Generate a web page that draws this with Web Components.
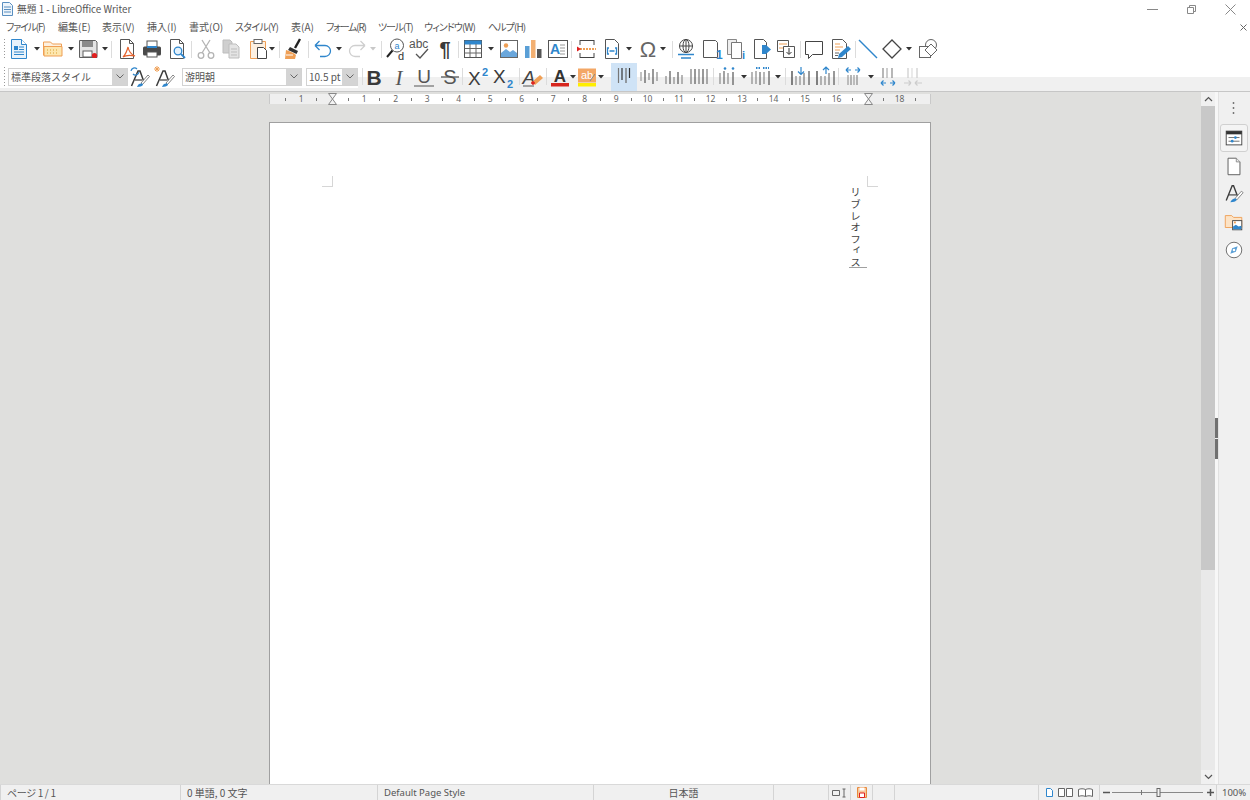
<!DOCTYPE html>
<html lang="ja">
<head>
<meta charset="utf-8">
<title>無題 1 - LibreOffice Writer</title>
<style>
html, body { margin: 0; height: 100%; overflow: hidden; background: #fff; }
body { font-family: "Noto Sans CJK JP", "Noto Sans", sans-serif; }
#app { display: flex; flex-direction: column; width: 1250px; height: 800px; }
#main { display: flex; flex: 1; min-height: 0; }
</style>
</head>
<body>
<div id="app">
  <lo-titlebar>無題 1 - LibreOffice Writer</lo-titlebar>
  <lo-menubar>
    <lo-menu w="52" sp="-1.2">ファイル(F)</lo-menu><lo-menu w="44">編集(E)</lo-menu><lo-menu w="45">表示(V)</lo-menu><lo-menu w="42">挿入(I)</lo-menu><lo-menu w="46">書式(O)</lo-menu><lo-menu w="56" sp="-.7">スタイル(Y)</lo-menu><lo-menu w="35">表(A)</lo-menu><lo-menu w="52" sp="-1.2">フォーム(R)</lo-menu><lo-menu w="46" sp="-1.1">ツール(T)</lo-menu><lo-menu w="64" sp="-.9">ウィンドウ(W)</lo-menu><lo-menu w="50" sp="-.9">ヘルプ(H)</lo-menu>
  </lo-menubar>
  <lo-toolbar h="26">
    <lo-tool kind="grip" cx="4"></lo-tool>
    <lo-tool icon="new" cx="19"></lo-tool><lo-tool kind="arrow" cx="37"></lo-tool>
    <lo-tool icon="open" cx="53"></lo-tool><lo-tool kind="arrow" cx="71"></lo-tool>
    <lo-tool icon="save" cx="88"></lo-tool><lo-tool kind="arrow" cx="105"></lo-tool>
    <lo-tool kind="sep" cx="111"></lo-tool>
    <lo-tool icon="pdf" cx="127"></lo-tool><lo-tool icon="print" cx="152"></lo-tool><lo-tool icon="preview" cx="177"></lo-tool>
    <lo-tool kind="sep" cx="191"></lo-tool>
    <lo-tool icon="cut" cx="206"></lo-tool><lo-tool icon="copy" cx="231"></lo-tool><lo-tool icon="paste" cx="258"></lo-tool><lo-tool kind="arrow" cx="272"></lo-tool>
    <lo-tool kind="sep" cx="279"></lo-tool>
    <lo-tool icon="clone" cx="293"></lo-tool>
    <lo-tool kind="sep" cx="308"></lo-tool>
    <lo-tool icon="undo" cx="323"></lo-tool><lo-tool kind="arrow" cx="339"></lo-tool>
    <lo-tool icon="redo" cx="357"></lo-tool><lo-tool kind="arrow" off cx="373"></lo-tool>
    <lo-tool kind="sep" cx="381"></lo-tool>
    <lo-tool icon="find" cx="396"></lo-tool><lo-tool icon="spell" cx="420"></lo-tool><lo-tool icon="pilcrow" cx="445"></lo-tool>
    <lo-tool kind="sep" cx="458"></lo-tool>
    <lo-tool icon="table" cx="473"></lo-tool><lo-tool kind="arrow" cx="491"></lo-tool>
    <lo-tool icon="image" cx="509"></lo-tool><lo-tool icon="chart" cx="533"></lo-tool><lo-tool icon="textbox" cx="558"></lo-tool>
    <lo-tool kind="sep" cx="571"></lo-tool>
    <lo-tool icon="pagebreak" cx="587"></lo-tool><lo-tool icon="field" cx="612"></lo-tool><lo-tool kind="arrow" cx="629"></lo-tool>
    <lo-tool icon="omega" cx="648"></lo-tool><lo-tool kind="arrow" cx="663"></lo-tool>
    <lo-tool kind="sep" cx="672"></lo-tool>
    <lo-tool icon="link" cx="686"></lo-tool><lo-tool icon="footnote" cx="711"></lo-tool><lo-tool icon="endnote" cx="736"></lo-tool><lo-tool icon="bookmark" cx="761"></lo-tool><lo-tool icon="crossref" cx="786"></lo-tool>
    <lo-tool kind="sep" cx="800"></lo-tool>
    <lo-tool icon="comment" cx="814"></lo-tool><lo-tool icon="track" cx="840"></lo-tool>
    <lo-tool kind="sep" cx="855"></lo-tool>
    <lo-tool icon="line" cx="868"></lo-tool><lo-tool icon="shape" cx="892"></lo-tool><lo-tool kind="arrow" cx="909"></lo-tool><lo-tool icon="draw" cx="928"></lo-tool>
  </lo-toolbar>
  <lo-toolbar h="30" band>
    <lo-tool kind="grip" cx="4"></lo-tool>
    <lo-combo w="120" cx="68">標準段落スタイル</lo-combo>
    <lo-tool icon="styleupd" cx="140"></lo-tool><lo-tool icon="stylenew" cx="165"></lo-tool>
    <lo-combo w="120" cx="242">游明朝</lo-combo>
    <lo-combo w="52" cx="332">10.5 pt</lo-combo>
    <lo-tool kind="sep" cx="362"></lo-tool>
    <lo-tool icon="bold" cx="374"></lo-tool><lo-tool icon="italic" cx="399"></lo-tool><lo-tool icon="under" cx="424"></lo-tool><lo-tool icon="strike" cx="450"></lo-tool>
    <lo-tool kind="sep" cx="462"></lo-tool>
    <lo-tool icon="sup" cx="479"></lo-tool><lo-tool icon="sub" cx="504"></lo-tool>
    <lo-tool kind="sep" cx="519"></lo-tool>
    <lo-tool icon="clear" cx="533"></lo-tool>
    <lo-tool kind="sep" cx="546"></lo-tool>
    <lo-tool icon="fontcolor" cx="560"></lo-tool><lo-tool kind="arrow" cx="573"></lo-tool>
    <lo-tool icon="hilite" cx="587"></lo-tool><lo-tool kind="arrow" cx="601"></lo-tool>
    <lo-tool icon="alTop" active cx="624"></lo-tool><lo-tool icon="alMid" cx="649"></lo-tool><lo-tool icon="alBot" cx="674"></lo-tool><lo-tool icon="alJust" cx="699"></lo-tool>
    <lo-tool kind="sep" cx="713"></lo-tool>
    <lo-tool icon="bullets" cx="727"></lo-tool><lo-tool kind="arrow" cx="744"></lo-tool>
    <lo-tool icon="numbers" cx="761"></lo-tool><lo-tool kind="arrow" cx="778"></lo-tool>
    <lo-tool kind="sep" cx="785"></lo-tool>
    <lo-tool icon="indDown" cx="801"></lo-tool><lo-tool icon="indUp" cx="826"></lo-tool>
    <lo-tool kind="sep" cx="838"></lo-tool>
    <lo-tool icon="spacing" cx="853"></lo-tool><lo-tool kind="arrow" cx="871"></lo-tool>
    <lo-tool icon="spInc" cx="888"></lo-tool><lo-tool icon="spDec" cx="913"></lo-tool>
  </lo-toolbar>
  <div id="main">
    <lo-document>
      <lo-ruler></lo-ruler>
      <lo-page>リブレオフィス</lo-page>
    </lo-document>
    <lo-scrollbar></lo-scrollbar>
    <lo-sash></lo-sash>
    <lo-sidebar></lo-sidebar>
  </div>
  <lo-statusbar></lo-statusbar>
</div>

<script>
const CJK = '"Noto Sans CJK JP", "Noto Sans", sans-serif';
const BLUE = '#2f86cc', ORANGE = '#ef9f55', DARK = '#3c3c3c';

// vertical bars for the paragraph/vertical align icons
function bars(list, col) {
    return list.map(b => `<path d="M${b[0]} ${b[1]}V${b[2]}" stroke="${b[3] || col || '#4a4a4a'}" stroke-width="1.2"/>`).join('');
}
function arrowsH(y, col) {
    return `<path d="M5 ${y}h5M5 ${y}l2.5-2.5M5 ${y}l2.5 2.5M19 ${y}h-5M19 ${y}l-2.5-2.5M19 ${y}l-2.5 2.5" stroke="${col}" stroke-width="1.2" fill="none"/>`;
}
const brush = `<path d="M3.5 21L10 6h2l4 11" fill="none" stroke="${DARK}" stroke-width="1.500"/><path d="M7 15h7" stroke="${DARK}" stroke-width="1.200"/>
    <path d="M13 18l7-8 1.500 1.500-7 8z" fill="#fff" stroke="#666" stroke-width=".8"/><path d="M9 22c1-3 3-4 5-3.500s1 3.500-5 3.500z" fill="${BLUE}"/>`;

const ICONS = {
    new: `<path d="M4.500 2.500h10l5 5v14h-15z" fill="#e9f3fb" stroke="${BLUE}"/><path d="M14.500 2.500v5h5" fill="#fff" stroke="${BLUE}"/>
        <rect x="7" y="9" width="4" height="4" fill="${BLUE}"/><path d="M12 10h5M12 12.500h5M7 15h10M7 17.500h10" stroke="${BLUE}"/>`,
    open: `<path d="M2.500 18V5h7l2 2h9v11z" fill="#fdf0e0" stroke="${ORANGE}"/><path d="M3 9.500h18v9.500H3z" fill="#fde6ae" stroke="${ORANGE}"/><path d="M6 13h12M6 16h12" stroke="#d9a02e" stroke-dasharray="1 2"/>`,
    save: `<path d="M3.500 3.500h16l1.500 1.500v15.500H3.500z" fill="#e4e4e4" stroke="#5e5e5e"/><rect x="6" y="4" width="11" height="6" fill="#8a8a8a"/><rect x="7" y="14" width="9" height="6" fill="#fff" stroke="#5e5e5e"/><circle cx="18.500" cy="18.500" r="2.600" fill="#e02020"/>`,
    pdf: `<path d="M5.500 2.500h9l4 4v15h-13z" fill="#fff" stroke="#555"/><path d="M14.500 2.500v4h4" fill="none" stroke="#555"/><path d="M20 19c-4-1.500-6-4-7-9-1 4-3 8-5 10 3-2 7-2 12-1z" fill="none" stroke="#e5622d" stroke-width="1.200"/>`,
    print: `<rect x="7" y="4" width="10" height="6" fill="#fff" stroke="#555"/><rect x="3" y="9.500" width="18" height="9" rx="1.500" fill="#4a4a4a"/><rect x="7" y="9" width="10" height="2" fill="${BLUE}"/><rect x="7" y="15" width="10" height="5" fill="#fff" stroke="#555"/>`,
    preview: `<path d="M5.500 2.500h9l4 4v15h-13z" fill="#fff" stroke="#555"/><path d="M14.500 2.500v4h4" fill="none" stroke="#555"/><circle cx="13" cy="14" r="3.800" fill="#e4f1fb" stroke="${BLUE}" stroke-width="1.300"/><path d="M16 17l4 4" stroke="${BLUE}" stroke-width="1.800"/>`,
    cut: `<path d="M8 3l8 13M16 3L8 16" stroke="#b4b4b4" stroke-width="1.300"/><circle cx="7" cy="18.500" r="2.800" fill="none" stroke="#b4b4b4" stroke-width="1.300"/><circle cx="17" cy="18.500" r="2.800" fill="none" stroke="#b4b4b4" stroke-width="1.300"/>`,
    copy: `<path d="M4 3h7l2 2v11H4z" fill="#cfcfcf" stroke="#bdbdbd"/><path d="M10 7h7l3 3v11H10z" fill="#e4e4e4" stroke="#bdbdbd"/><path d="M12 12h6M12 15h6M12 18h6" stroke="#bdbdbd"/>`,
    paste: `<path d="M4.500 4.500h15v17h-15z" fill="#fdf0e1" stroke="${ORANGE}"/><rect x="8" y="2.500" width="8" height="4" fill="#fff" stroke="#666"/><path d="M11.500 10.500h6l3 3v8h-9z" fill="#fff" stroke="#444"/>`,
    clone: `<path d="M14 11l5-9" stroke="#222" stroke-width="2.400"/><path d="M9 10l8 4-1.500 3L7 13z" fill="#333"/><path d="M5 13c4 1 8 3 10 5l-1 4H4z" fill="${ORANGE}"/><path d="M5 18h7" stroke="#fff"/>`,
    undo: `<path d="M4 8.500h10a5.500 5.500 0 0 1 0 11h-5M4 8.500l4.500-4.500M4 8.500l4.500 4.500" fill="none" stroke="${BLUE}" stroke-width="1.300"/>`,
    redo: `<path d="M20 8.500H10a5.500 5.500 0 0 0 0 11h5M20 8.500l-4.500-4.500M20 8.500l-4.500 4.500" fill="none" stroke="#cfcfcf" stroke-width="1.300"/>`,
    find: `<circle cx="13" cy="8.500" r="6.500" fill="#fff" stroke="#555"/><path d="M8.500 13.500L3 20" stroke="#222" stroke-width="2"/><text x="13" y="11.500" font-size="9" text-anchor="middle" fill="${BLUE}" font-family="Liberation Sans">a</text><text x="14" y="22.500" font-size="11" fill="#333" font-family="Liberation Sans">d</text>`,
    spell: `<text x="1" y="11" font-size="12" fill="#555" font-family="Liberation Sans">abc</text><path d="M8 17l4 4 8-9" fill="none" stroke="#555" stroke-width="1.300"/>`,
    pilcrow: `<text x="12" y="18.500" font-size="20" font-weight="bold" text-anchor="middle" fill="#3a3a3a" font-family="Liberation Sans">¶</text>`,
    table: `<rect x="3.500" y="3.500" width="17" height="17" fill="#fff" stroke="#555"/><rect x="3.500" y="3.500" width="17" height="4" fill="${BLUE}"/><path d="M3.500 11.500h17M3.500 16h17M9 7v13M15 7v13" stroke="#666"/>`,
    image: `<rect x="3.500" y="3.500" width="17" height="17" fill="#fff" stroke="#666"/><circle cx="9" cy="8.500" r="2.200" fill="${ORANGE}"/><path d="M4 20v-4l5-4 4 3 3-2 4 3v4z" fill="#6aa7dc"/>`,
    chart: `<rect x="4" y="9" width="4.500" height="12" fill="#5a9fd6"/><rect x="10" y="3" width="4.500" height="18" fill="#f3b072"/><rect x="16" y="12" width="4.500" height="9" fill="#555"/>`,
    textbox: `<rect x="2.500" y="3.500" width="19" height="17" fill="#fff" stroke="#555"/><text x="4" y="17" font-size="14" font-weight="bold" fill="${BLUE}" font-family="Liberation Sans">A</text><path d="M14 8h5M14 11h5M14 14h5M14 17h5" stroke="#999"/>`,
    pagebreak: `<path d="M5 3.500h14M5 20.500h14" stroke="#444"/><path d="M5 3v5M19 3v5M5 16v5M19 16v5" stroke="#444"/><path d="M5 12h16" stroke="${ORANGE}" stroke-width="2" stroke-dasharray="2 1"/><path d="M2 9.500v5l4-2.500z" fill="#e02020"/>`,
    field: `<path d="M5.500 2.500h9l4 4v15h-13z" fill="#fff" stroke="#555"/><path d="M9 11H7.500v6H9M15 11h1.500v6H15M9.500 14h5" fill="none" stroke="${BLUE}" stroke-width="1.300"/>`,
    omega: `<text x="12" y="19.500" font-size="22" text-anchor="middle" fill="#666" font-family="Liberation Sans">Ω</text>`,
    link: `<circle cx="12" cy="9" r="6.500" fill="none" stroke="#444"/><ellipse cx="12" cy="9" rx="3" ry="6.500" fill="none" stroke="#444"/><path d="M5.500 9h13M12 2.500v13" stroke="#444"/><path d="M4 17.500h16M7 21h10" stroke="${BLUE}" stroke-width="1.500"/>`,
    footnote: `<path d="M4.500 3.500h12l2 2v15h-14z" fill="#fff" stroke="#555"/><text x="17" y="22" font-size="12" font-weight="bold" fill="${BLUE}" font-family="Liberation Sans">1</text>`,
    endnote: `<path d="M3.500 2.500h9v15h-9z" fill="#eee" stroke="#888"/><path d="M7.500 5.500h10v16h-10z" fill="#fff" stroke="#777"/><text x="18" y="22" font-size="11" font-weight="bold" fill="${BLUE}" font-family="Liberation Sans">i</text>`,
    bookmark: `<path d="M5.500 2.500h9l3 3v16h-12z" fill="#fff" stroke="#555"/><path d="M13 8h4l5 4.500-5 4.500h-4z" fill="${BLUE}"/>`,
    crossref: `<path d="M3.500 3.500h11v11h-11z" fill="#fff" stroke="#555"/><path d="M9.500 9.500h11v11h-11z" fill="#fff" stroke="#555"/><path d="M5 7h8M5 11h4" stroke="${ORANGE}"/><path d="M15 11v6M12.500 15l2.500 2.500 2.500-2.500" fill="none" stroke="#333"/>`,
    comment: `<path d="M3.500 4.500h17v13h-10l-4 4v-4h-3z" fill="#fff" stroke="#444"/>`,
    track: `<path d="M4.500 2.500h10l4 4v15h-14z" fill="#fff" stroke="#555"/><path d="M7 7h5M7 10h8M7 13h5" stroke="${ORANGE}"/><path d="M7 16h4M7 18.500h3" stroke="#666"/><path d="M10 21l1-4 9-8 3 3-9 8z" fill="${BLUE}"/>`,
    line: `<path d="M3 3l18 18" stroke="${BLUE}" stroke-width="1.400"/>`,
    shape: `<path d="M12 3l9 9-9 9-9-9z" fill="#fff" stroke="#444" stroke-width="1.300"/>`,
    draw: `<circle cx="15" cy="8" r="5.500" fill="#fff" stroke="#666"/><rect x="3.500" y="9.500" width="11" height="11" fill="#fff" stroke="#666"/><path d="M15 7l6 6-6 6-6-6z" fill="#fff" stroke="#666"/>`,
    styleupd: brush + `<path d="M3 6a3.500 3.500 0 0 1 6-2M11 7a3.500 3.500 0 0 1-6 2" fill="none" stroke="${BLUE}" stroke-width="1.200"/>`,
    stylenew: brush + `<path d="M2 2l4 4M6 2L2 6M4 1v6M1 4h6" stroke="${ORANGE}"/>`,
    bold: `<text x="12" y="19.500" font-size="21" font-weight="bold" text-anchor="middle" fill="#3a3a3a" font-family="Liberation Sans">B</text>`,
    italic: `<text x="12" y="19.500" font-size="21" font-style="italic" text-anchor="middle" fill="#555" font-family="Liberation Serif">I</text>`,
    under: `<text x="12" y="17.500" font-size="19" text-anchor="middle" fill="#555" font-family="Liberation Sans">U</text><path d="M2 21h20" stroke="#777" stroke-width="1.300"/>`,
    strike: `<text x="12" y="19" font-size="20" text-anchor="middle" fill="#555" font-family="Liberation Sans">S</text><path d="M3 12h18" stroke="#555" stroke-width="1.300"/>`,
    sup: `<text x="1" y="20" font-size="19" fill="#3c3c3c" font-family="Liberation Sans">X</text><text x="15" y="11" font-size="11" font-weight="bold" fill="${BLUE}" font-family="Liberation Sans">2</text>`,
    sub: `<text x="1" y="18" font-size="19" fill="#3c3c3c" font-family="Liberation Sans">X</text><text x="15" y="22.500" font-size="11" font-weight="bold" fill="${BLUE}" font-family="Liberation Sans">2</text>`,
    clear: `<text x="1.500" y="19" font-size="19" font-style="italic" fill="#444" font-family="Liberation Sans">A</text><path d="M2 21h11" stroke="#555"/><path d="M11 17l8-7 3 3-8 7z" fill="${ORANGE}"/><path d="M10 18h4M12 16v4" stroke="#e02020" stroke-width="1.400"/>`,
    fontcolor: `<text x="12" y="16.500" font-size="17" font-weight="bold" text-anchor="middle" fill="#333" font-family="Liberation Sans">A</text><rect x="3" y="18" width="18" height="3.500" fill="#d7261e"/>`,
    hilite: `<rect x="3" y="3.500" width="18" height="14" fill="#f3a766"/><text x="12" y="14" font-size="11" text-anchor="middle" fill="#fff" font-family="Liberation Sans">ab</text><path d="M15 16l5-7" stroke="#888"/><rect x="3" y="18" width="18" height="3.500" fill="#ffee00"/>`,
    alTop: bars([[6.500,3,18,'#777'],[10,3,15,'#333'],[14,3,18,'#666'],[17.500,3,13,'#333']]),
    alMid: bars([[4,7,16,'#999'],[8,5,18,'#555'],[12,8,15,'#888'],[16,4,19,'#555'],[20,7,16,'#888']]),
    alBot: bars([[4,11,19,'#888'],[8,6,19,'#555'],[12,12,19,'#888'],[16,7,19,'#555'],[20,10,19,'#888']]),
    alJust: bars([[4,4,19,'#777'],[8,4,19,'#555'],[12,4,19,'#777'],[16,4,19,'#555'],[20,4,19,'#777']]),
    bullets: bars([[5,8,19,'#888'],[9,6,19,'#666'],[13,8,19,'#888'],[18,7,20,'#555']]) + `<circle cx="10" cy="3.500" r="1.300" fill="${BLUE}"/><circle cx="18" cy="3.500" r="1.300" fill="${BLUE}"/>`,
    numbers: bars([[3,7,19,'#888'],[7,6,19,'#888'],[11,7,20,'#666'],[15,7,19,'#888'],[20,6,20,'#555']]) + `<path d="M7 3h4M14 3h6" stroke="${BLUE}" stroke-width="2" stroke-dasharray="1.500 1"/>`,
    indDown: bars([[3,6,20,'#333'],[7,11,20,'#888'],[11,11,20,'#888'],[15,8,20,'#777'],[20,6,20,'#555']]) + `<path d="M12 2v7M9 6.500L12 9.500l3-3" fill="none" stroke="${BLUE}" stroke-width="1.200"/>`,
    indUp: bars([[3,6,20,'#333'],[7,11,20,'#888'],[11,11,20,'#888'],[15,8,20,'#777'],[20,6,20,'#555']]) + `<path d="M12 2v7M9 5L12 2l3 3" fill="none" stroke="${BLUE}" stroke-width="1.200"/>`,
    spacing: arrowsH(5, BLUE) + bars([[7,10,20,'#999'],[10,10,20,'#888'],[13,10,20,'#999'],[16,10,20,'#888']]),
    spInc: bars([[7,3,13,'#888'],[11,3,13,'#aaa'],[16,3,13,'#888']]) + arrowsH(18, BLUE),
    spDec: bars([[7,3,13,'#ccc'],[11,3,13,'#ddd'],[16,3,13,'#ccc']]) + `<path d="M3 18h7M10 18l-2.500-2.500M10 18l-2.500 2.500M21 18h-7M14 18l2.500-2.500M14 18l2.500 2.500" stroke="#ccc" stroke-width="1.200" fill="none"/>`,
    // sidebar decks
    deck: `<rect x="3.500" y="4.500" width="17" height="15" fill="#fff" stroke="#444"/><rect x="3.500" y="4.500" width="17" height="3.500" fill="#333"/><path d="M6 11.500h12M6 15.500h12" stroke="#666"/><circle cx="13.500" cy="11.500" r="1.500" fill="${BLUE}"/><circle cx="10" cy="15.500" r="1.500" fill="${BLUE}"/>`,
    page: `<path d="M5.500 3.500h9l4 4v14h-13z" fill="#fff" stroke="#555"/><path d="M14.500 3.500v4h4" fill="#eee" stroke="#888"/>`,
    styles: `<path d="M3.500 19L10 3h1.500l5 13" fill="none" stroke="${DARK}" stroke-width="1.500"/><path d="M6.500 13h8" stroke="${DARK}" stroke-width="1.200"/><path d="M13 17l7-8 2 1.500-7 8z" fill="#fff" stroke="#666" stroke-width=".8"/><path d="M8 21c1-3 4-4.500 6-4s1 4-6 4z" fill="${BLUE}"/>`,
    gallery: `<path d="M2.500 18V5h7l2 2h9v11z" fill="#fce3c6" stroke="${ORANGE}"/><rect x="10.500" y="10.500" width="10" height="10" fill="#fff" stroke="#444"/><path d="M11 20v-3l3-2 3 2 3-1v4z" fill="${BLUE}"/><rect x="12" y="11.500" width="2" height="2" fill="${ORANGE}"/>`,
    compass: `<circle cx="12" cy="12" r="8.500" fill="#fff" stroke="#666"/><path d="M16 8l-2 6-6 2 2-6z" fill="#5a9fd6"/><circle cx="12" cy="12" r="1.400" fill="#fff"/>`
};
function svg(name, size) {
    return `<svg xmlns="http://www.w3.org/2000/svg" width="${size}" height="${size}" viewBox="0 0 24 24" style="display:block;flex:none">${ICONS[name]}</svg>`;
}

class LoTitlebar extends HTMLElement {
    connectedCallback() {
        this.attachShadow({ mode: 'open' }).innerHTML = `
            <style>
                :host { display: flex; align-items: center; height: 18px; flex: none; background: #fff; }
                .ico { margin: 0 4px 0 2px; }
                .txt { flex: 1; font: 9.750px/18px "Noto Sans CJK JP", "Noto Sans", sans-serif; color: #555; white-space: nowrap; font-feature-settings: "palt"; }
                .btn { width: 39px; height: 18px; display: flex; align-items: center; justify-content: center; }
            </style>
            <svg class="ico" width="11" height="14" viewBox="0 0 11 14"><path d="M.5.5h7l3 3v10H.500z" fill="#eef5fb" stroke="#5a8fc0"/><path d="M2 5h7M2 7.500h7M2 10h7" stroke="#5a8fc0"/></svg>
            <span class="txt"><slot></slot></span>
            <span class="btn"><svg width="11" height="11"><path d="M0 5.500h11" stroke="#888"/></svg></span>
            <span class="btn"><svg width="11" height="11"><path d="M1.500 3.500h6v6h-6zM3.500 3.500v-2h6v6h-2" fill="none" stroke="#888"/></svg></span>
            <span class="btn"><svg width="11" height="11"><path d="M.5.500l10 10M10.500.500l-10 10" stroke="#888"/></svg></span>`;
    }
}
customElements.define('lo-titlebar', LoTitlebar);

class LoMenubar extends HTMLElement {
    connectedCallback() {
        this.attachShadow({ mode: 'open' }).innerHTML = `
            <style>
                :host { display: flex; align-items: center; height: 18px; flex: none; background: #fff; padding-left: 6px; box-sizing: border-box; }
                .items { flex: 1; display: flex; }
                svg { margin-right: 3px; }
            </style>
            <div class="items"><slot></slot></div>
            <svg width="7" height="7"><path d="M.5.500l6 6M6.500.500l-6 6" stroke="#666"/></svg>`;
    }
}
customElements.define('lo-menubar', LoMenubar);

class LoMenu extends HTMLElement {
    connectedCallback() {
        this.attachShadow({ mode: 'open' }).innerHTML = `
            <style>
                :host { display: block; flex: none; width: ${this.getAttribute('w')}px; font: 10px/18px ${CJK}; letter-spacing: ${this.getAttribute('sp') || 0}px; color: #555; white-space: nowrap; font-feature-settings: "palt"; }
            </style><slot></slot>`;
    }
}
customElements.define('lo-menu', LoMenu);

class LoTool extends HTMLElement {
    boxWidth() {
        const k = this.getAttribute('kind');
        return k === 'arrow' ? 10 : k === 'sep' ? 1 : k === 'grip' ? 3 : 24;
    }
    connectedCallback() {
        const k = this.getAttribute('kind');
        const root = this.attachShadow({ mode: 'open' });
        const base = `:host { display: flex; flex: none; align-items: center; justify-content: center; width: ${this.boxWidth()}px; }`;
        if (k === 'sep') {
            root.innerHTML = `<style>${base} div { width: 1px; height: 17px; background: #dcdcdc; }</style><div></div>`;
        } else if (k === 'grip') {
            root.innerHTML = `<style>${base} div { width: 1px; height: 20px; background: repeating-linear-gradient(#999 0 1px, transparent 1px 3px); }</style><div></div>`;
        } else if (k === 'arrow') {
            const col = this.hasAttribute('off') ? '#c8c8c8' : '#333';
            root.innerHTML = `<style>${base}</style><svg width="6" height="4"><path d="M0 0h6L3 3.500z" fill="${col}"/></svg>`;
        } else {
            const active = this.hasAttribute('active')
                ? `:host { height: 26px; background: #cfe3f6; outline: 1px solid #cfe3f6; }` : '';
            root.innerHTML = `<style>${base} ${active}</style>${svg(this.getAttribute('icon'), 24)}`;
        }
    }
}
customElements.define('lo-tool', LoTool);

class LoCombo extends HTMLElement {
    boxWidth() { return Number(this.getAttribute('w')); }
    connectedCallback() {
        this.attachShadow({ mode: 'open' }).innerHTML = `
            <style>
                :host { display: flex; flex: none; width: ${this.boxWidth()}px; height: 18px; box-sizing: border-box; border: 1px solid #d2d2d2; background: #fff; }
                .val { flex: 1; padding-left: 2px; font: 10px/16px ${CJK}; color: #555; white-space: nowrap; overflow: hidden; }
                .drop { width: 15px; background: #d4d4d4; display: flex; align-items: center; justify-content: center; }
            </style>
            <div class="val"><slot></slot></div>
            <div class="drop"><svg width="8" height="5"><path d="M.5.500L4 4 7.500.500" fill="none" stroke="#666"/></svg></div>`;
    }
}
customElements.define('lo-combo', LoCombo);

// a row of tools; each child carries the centre it should sit on, the gap before it is worked out here
class LoToolbar extends HTMLElement {
    connectedCallback() {
        this.attachShadow({ mode: 'open' }).innerHTML = `
            <style>
                :host { display: flex; align-items: center; height: ${this.getAttribute('h')}px; flex: none; box-sizing: border-box; background: #fff; }
                :host([band]) {
                    border-bottom: 1px solid #c6c6c6;
                    background:
                        linear-gradient(#f0f0f0, #f0f0f0) 358px 15px / 100% 100% no-repeat,
                        linear-gradient(#f0f0f0, #f0f0f0) 0 26px / 100% 100% no-repeat,
                        #fff;
                }
            </style><slot></slot>`;
        let x = 0;
        for (const c of this.children) {
            const w = c.boxWidth();
            const left = Number(c.getAttribute('cx')) - w / 2;
            c.style.marginLeft = (left - x) + 'px';
            x = left + w;
        }
    }
}
customElements.define('lo-toolbar', LoToolbar);

class LoDocument extends HTMLElement {
    connectedCallback() {
        this.attachShadow({ mode: 'open' }).innerHTML = `
            <style>
                :host { display: flex; flex-direction: column; align-items: center; flex: 1; min-width: 0; overflow: hidden; background: #dfdfdd; }
            </style><slot></slot>`;
    }
}
customElements.define('lo-document', LoDocument);

class LoRuler extends HTMLElement {
    connectedCallback() {
        let cells = '';
        for (let i = 0; i < 41; i++) {
            const v = -1.5 + i * 0.5;
            if (v === 0 || v === 17) {
                cells += `<span class="c"><svg width="9" height="12"><path d="M.5.500h8L4.500 6l4 5.500h-8L4.500 6z" fill="#f4f4f4" stroke="#888"/></svg></span>`;
            } else if (Number.isInteger(v)) {
                cells += `<span class="c">${Math.abs(v)}</span>`;
            } else {
                cells += `<span class="c"><i></i></span>`;
            }
        }
        this.attachShadow({ mode: 'open' }).innerHTML = `
            <style>
                :host { display: block; flex: none; width: 662px; height: 14px; padding-top: 2px; box-sizing: border-box; }
                .r { display: flex; height: 10px; padding-left: 7.500px; box-sizing: border-box; overflow: visible;
                     border: 1px solid #c9c9c9; border-width: 0 1px;
                     background: linear-gradient(to right, #efefef 63px, #fff 63px, #fff 598px, #efefef 598px); }
                .c { flex: none; width: 15.75px; display: flex; align-items: center; justify-content: center; font: 8.500px/10px "Noto Sans", sans-serif; color: #666; }
                i { display: block; width: 1px; height: 3px; background: #777; }
            </style>
            <div class="r">${cells}</div>`;
    }
}
customElements.define('lo-ruler', LoRuler);

class LoPage extends HTMLElement {
    connectedCallback() {
        this.attachShadow({ mode: 'open' }).innerHTML = `
            <style>
                :host { display: flex; flex-direction: column; flex: 1; margin-top: 16px; width: 662px; box-sizing: border-box; background: #fff; border: 1px solid #a0a0a0; border-bottom: 0; padding: 53px 52px 0; }
                .marks { display: flex; justify-content: space-between; }
                .mark { width: 10px; height: 10px; border-bottom: 1px solid #d6d6d6; }
                .mark.l { border-right: 1px solid #d6d6d6; }
                .mark.r { border-left: 1px solid #d6d6d6; }
                .text { align-self: flex-end; margin-right: 11px; width: 18px; height: 81px; padding-right: 5px; box-sizing: border-box; border-bottom: 1px solid #a0a0a0; writing-mode: vertical-rl; font: 400 10.500px/14px ${CJK}; letter-spacing: 1.150px; color: #444; white-space: nowrap; }
            </style>
            <div class="marks"><div class="mark l"></div><div class="mark r"></div></div>
            <div class="text"><slot></slot></div>`;
    }
}
customElements.define('lo-page', LoPage);

class LoScrollbar extends HTMLElement {
    connectedCallback() {
        this.attachShadow({ mode: 'open' }).innerHTML = `
            <style>
                :host { display: flex; flex-direction: column; flex: none; width: 15px; box-sizing: border-box; border-left: 1px solid #dfdfdd; background: #e9e9e9; }
                .btn { height: 14px; flex: none; background: #f0f0f0; display: flex; align-items: center; justify-content: center; }
                .thumb { height: 464px; flex: none; background: #c8c8c8; }
                .rest { flex: 1; }
            </style>
            <div class="btn"><svg width="9" height="6"><path d="M1 5l3.500-3.500L8 5" fill="none" stroke="#555" stroke-width="1.200"/></svg></div>
            <div class="thumb"></div><div class="rest"></div>
            <div class="btn"><svg width="9" height="6"><path d="M1 1l3.500 3.500L8 1" fill="none" stroke="#555" stroke-width="1.200"/></svg></div>`;
    }
}
customElements.define('lo-scrollbar', LoScrollbar);

class LoSash extends HTMLElement {
    connectedCallback() {
        this.attachShadow({ mode: 'open' }).innerHTML = `
            <style>
                :host { display: flex; align-items: center; flex: none; width: 3px; background: #f7f7f7; border-right: 1px solid #e2e2e2; }
                div { width: 3px; height: 41px; background: linear-gradient(#707070 48%, #eee 48%, #eee 52%, #707070 52%); }
            </style><div></div>`;
    }
}
customElements.define('lo-sash', LoSash);

class LoSidebar extends HTMLElement {
    connectedCallback() {
        const decks = ['deck', 'page', 'styles', 'gallery', 'compass'];
        this.attachShadow({ mode: 'open' }).innerHTML = `
            <style>
                :host { display: flex; flex-direction: column; align-items: center; flex: none; width: 31px; box-sizing: border-box; padding-right: 2px; background: #f0f0f0; }
                .more { height: 31px; flex: none; display: flex; align-items: center; margin-bottom: 1px; }
                .deck { width: 28px; height: 28px; flex: none; box-sizing: border-box; display: flex; align-items: center; justify-content: center; }
                .deck.on { border: 1px solid #d0d0d0; border-radius: 3px; background: #f4f4f4; }
            </style>
            <div class="more"><svg width="3" height="12"><path d="M1.500 0v2M1.500 5v2M1.500 10v2" stroke="#777" stroke-width="1.500"/></svg></div>
            ${decks.map((d, i) => `<div class="deck ${i === 0 ? 'on' : ''}">${svg(d, 22)}</div>`).join('')}`;
    }
}
customElements.define('lo-sidebar', LoSidebar);

class LoStatusbar extends HTMLElement {
    connectedCallback() {
        this.attachShadow({ mode: 'open' }).innerHTML = `
            <style>
                :host { display: flex; height: 16px; flex: none; box-sizing: border-box; background: #f0f0f0; border-top: 1px solid #d9d9d9; font: 10px/15px ${CJK}; color: #555; }
                .s { flex: none; box-sizing: border-box; display: flex; align-items: center; border-left: 1px solid #d4d4d4; white-space: nowrap; padding-left: 6px; overflow: hidden; }
                .s:first-child { border-left: 0; }
                .c { justify-content: center; padding-left: 0; }
                .en { font-family: "Noto Sans", sans-serif; font-size: 9.500px; }
                .kana { font-feature-settings: "palt"; letter-spacing: -.3px; }
            </style>
            <div class="s kana" style="width:180px">ページ 1 / 1</div>
            <div class="s" style="width:197px">0 単語, 0 文字</div>
            <div class="s en" style="width:216px">Default Page Style</div>
            <div class="s c" style="width:180px">日本語</div>
            <div class="s" style="width:55px"></div>
            <div class="s c" style="width:22px">
                <svg width="15" height="10"><path d="M.5 2.500h7v5h-7z" fill="none" stroke="#666"/><path d="M10.500 1h3M12 1v8M10.500 9h3" fill="none" stroke="#666"/></svg>
            </div>
            <div class="s c" style="width:22px">
                <svg width="10" height="11"><path d="M.5.500h9v10h-9z" fill="#f7c79a" stroke="#e98a3d"/><path d="M2.500.500h5v3h-5z" fill="#fff"/><path d="M2.500 6h5v4.500h-5z" fill="#fff" stroke="#e02020"/></svg>
            </div>
            <div class="s" style="width:22px"></div>
            <div class="s" style="width:144px"></div>
            <div class="s" style="width:61px;padding-left:7px;gap:5px">
                <svg width="7" height="9" style="flex:none"><path d="M.5.500h4l2 2v6h-6z" fill="#fff" stroke="${BLUE}"/></svg>
                <svg width="15" height="9" style="flex:none"><path d="M.5.500h6v8h-6zM8.500.500h6v8h-6z" fill="#fff" stroke="#666"/></svg>
                <svg width="15" height="9" style="flex:none"><path d="M.5 1.500c2-1 5-1 7 0 2-1 5-1 7 0v7c-2-1-5-1-7 0-2-1-5-1-7 0zM7.500 1.500v7" fill="#fff" stroke="#666"/></svg>
            </div>
            <div class="s" style="width:117px;padding-left:3px">
                <svg width="114" height="11"><path d="M0 5.500h7" stroke="#555" stroke-width="1.500"/><path d="M9 5.500h91" stroke="#888"/><path d="M38.500 3v5" stroke="#777"/><rect x="54" y="1.500" width="3" height="8" fill="#f4f4f4" stroke="#666"/><path d="M104 5.500h7M107.500 2v7" stroke="#555" stroke-width="1.500"/></svg>
            </div>
            <div class="s en" style="width:34px;padding-left:5px">100%</div>`;
    }
}
customElements.define('lo-statusbar', LoStatusbar);
</script>
</body>
</html>
